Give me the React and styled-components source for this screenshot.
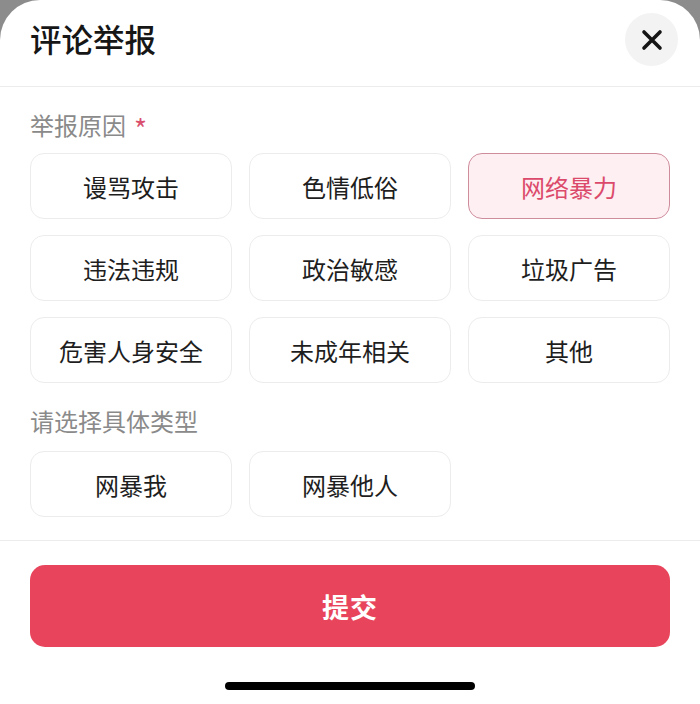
import React, { useState } from 'react'
import styled, { createGlobalStyle } from 'styled-components'

const REASONS = [
  '谩骂攻击', '色情低俗', '网络暴力',
  '违法违规', '政治敏感', '垃圾广告',
  '危害人身安全', '未成年相关', '其他',
]

const TYPES = ['网暴我', '网暴他人']

const Global = createGlobalStyle`
  html, body {
    margin: 0;
    padding: 0;
    background: #8c8c8c;
  }
  body {
    font-family: "Noto Sans CJK SC", "Noto Sans", sans-serif;
    -webkit-font-smoothing: antialiased;
  }
`

const Sheet = styled.div`
  width: 700px;
  height: 704px;
  box-sizing: border-box;
  background: #fff;
  border-radius: 40px 40px 0 0;
  display: flex;
  flex-direction: column;
  overflow: hidden;
`

const Header = styled.div`
  height: 87px;
  box-sizing: border-box;
  padding: 0 22px 11px 30px;
  display: flex;
  align-items: center;
  justify-content: space-between;
  border-bottom: 1px solid #ececec;
`

const Title = styled.h1`
  margin: 0;
  font-size: 31.5px;
  font-weight: 500;
  color: #161616;
`

const CloseButton = styled.button`
  width: 53px;
  height: 53px;
  margin-top: 4px;
  border: none;
  border-radius: 50%;
  background: #f3f3f3;
  display: flex;
  align-items: center;
  justify-content: center;
  padding: 0;
  cursor: pointer;
`

const Body = styled.div`
  padding: 21px 30px 23px;
  border-bottom: 1px solid #ececec;
`

const Label = styled.div`
  height: 30px;
  font-size: 24px;
  line-height: 30px;
  color: #8a8a8a;
  margin-top: ${p => p.$top || 0}px;
  margin-bottom: 15px;
`

const Star = styled.span`
  position: relative;
  top: 5px;
  color: #d9506e;
  font-size: 28px;
  margin-left: 8px;
`

const ChipGrid = styled.div`
  display: grid;
  grid-template-columns: repeat(3, 1fr);
  column-gap: 17px;
  row-gap: 16px;
`

const Chip = styled.button`
  height: 66px;
  box-sizing: border-box;
  border-radius: 14px;
  border: 1.5px solid ${p => (p.$active ? '#cf8c9c' : '#ececec')};
  background: ${p => (p.$active ? '#fdeff2' : '#fff')};
  color: ${p => (p.$active ? '#dc4a6b' : '#1e1e1e')};
  font-family: inherit;
  font-size: 24px;
  padding: 0;
  cursor: pointer;
`

const Footer = styled.div`
  padding: 24px 30px 0;
  display: flex;
  flex-direction: column;
  align-items: center;
`

const Submit = styled.button`
  width: 100%;
  height: 82px;
  border: none;
  border-radius: 15px;
  background: #e8455c;
  color: #fff;
  font-family: inherit;
  font-size: 27px;
  font-weight: 600;
  letter-spacing: 1px;
  cursor: pointer;
`

const HomeBar = styled.div`
  width: 250px;
  height: 8px;
  border-radius: 4px;
  background: #000;
  margin-top: 35px;
`

const CloseIcon = () => (
  <svg width="22" height="22" viewBox="0 0 22 22">
    <path d="M3 3L19 19M19 3L3 19" stroke="#151515" strokeWidth="3.6" strokeLinecap="round" />
  </svg>
)

export default function App() {
  const [reason, setReason] = useState('网络暴力')
  const [type, setType] = useState(null)

  return (
    <>
      <Global />
      <Sheet>
        <Header>
          <Title>评论举报</Title>
          <CloseButton aria-label="关闭">
            <CloseIcon />
          </CloseButton>
        </Header>
        <Body>
          <Label>
            举报原因<Star>*</Star>
          </Label>
          <ChipGrid>
            {REASONS.map(r => (
              <Chip key={r} $active={reason === r} onClick={() => setReason(r)}>
                {r}
              </Chip>
            ))}
          </ChipGrid>
          <Label $top={23}>请选择具体类型</Label>
          <ChipGrid>
            {TYPES.map(t => (
              <Chip key={t} $active={type === t} onClick={() => setType(t)}>
                {t}
              </Chip>
            ))}
          </ChipGrid>
        </Body>
        <Footer>
          <Submit>提交</Submit>
          <HomeBar />
        </Footer>
      </Sheet>
    </>
  )
}
